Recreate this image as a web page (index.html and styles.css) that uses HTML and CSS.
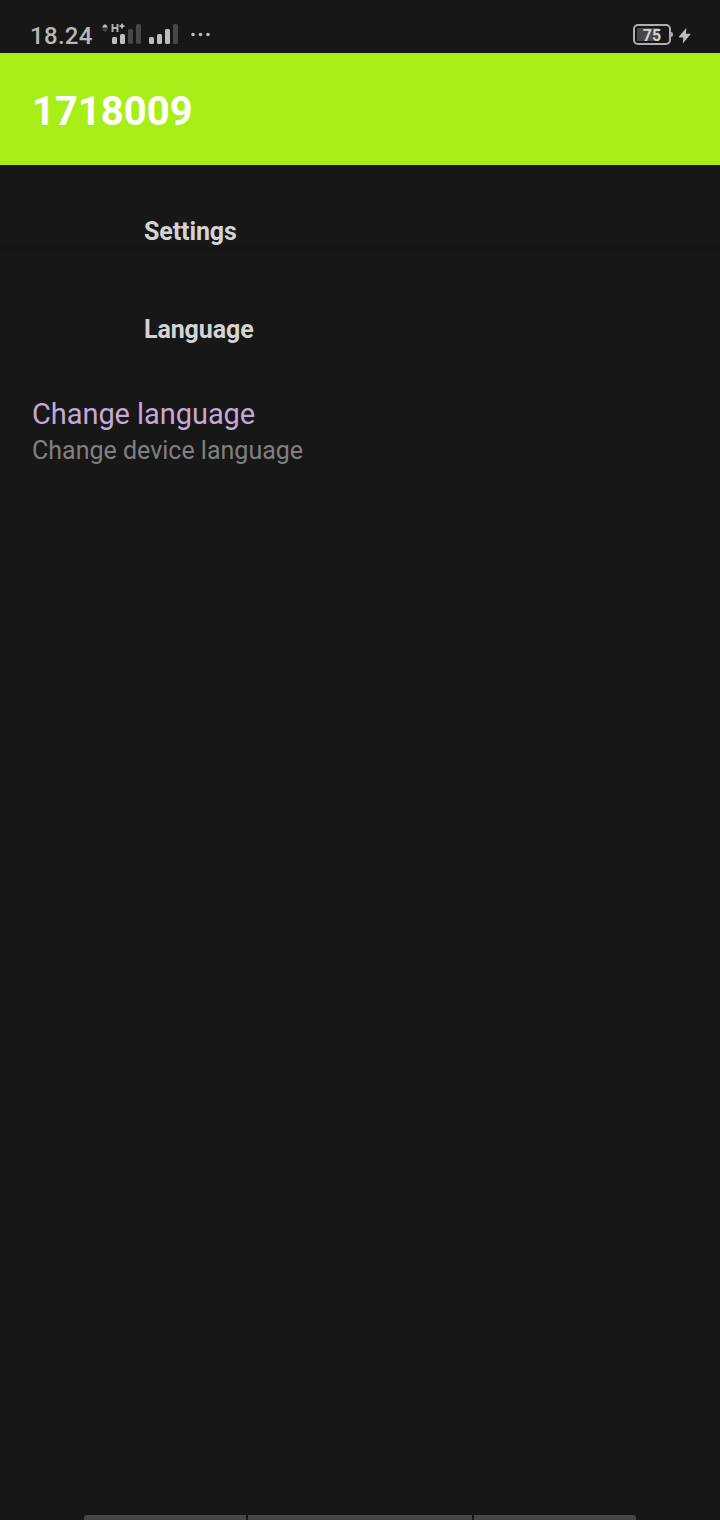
FILE: index.html
```html
<!DOCTYPE html>
<html lang="en">
<head>
<meta charset="utf-8">
<title>Settings</title>
<link rel="stylesheet" href="styles.css">
</head>
<body>
<div class="screen">
  <div class="status">
    <span class="time">18.24</span>
    <svg class="signals" width="112" height="26" viewBox="102 20 112 26">
      <g fill="#bdbdbd">
        <path d="M102 27.500 L104 24.500 H106 L108 27.500Z"/>
        <path d="M112.500 24v8M117.500 24v8M112 28h5.500" fill="none" stroke="#b0b0b0" stroke-width="1.900"/>
        <path d="M121.100 23.800h1.800v1.400h1.600v1.800h-1.600v1.400h-1.800v-1.400h-1.600v-1.800h1.600z"/>
        <rect x="112" y="37" width="5" height="7" rx="1.500"/>
        <rect x="120" y="34" width="5" height="10" rx="1.500"/>
        <rect x="149" y="37" width="5" height="7" rx="1.500"/>
        <rect x="157" y="34" width="5" height="10" rx="1.500"/>
        <rect x="165" y="29" width="5" height="15" rx="1.500"/>
        <circle cx="193" cy="34.500" r="1.800"/>
        <circle cx="200.500" cy="34.500" r="1.800"/>
        <circle cx="208" cy="34.500" r="1.800"/>
      </g>
      <g fill="#474747">
        <path d="M102 28.500h6L106 31.500H104Z"/>
        <rect x="128" y="29" width="5" height="15" rx="1.500"/>
        <rect x="136" y="24" width="5" height="20" rx="1.500"/>
        <rect x="173" y="24" width="5" height="20" rx="1.500"/>
      </g>
    </svg>
    <div class="battery"><span class="level">75</span></div>
    <svg class="bolt" width="12" height="16" viewBox="0 0 12 16"><path d="M7.300 0 L0 8.500 V9.500 H4.300 L3.800 15.500 L11.200 6.800 V5.800 H7Z" fill="#bdbdbd"/></svg>
  </div>
  <header class="appbar">1718009</header>
  <main class="content">
    <h2 class="category">Settings</h2>
    <h2 class="category second">Language</h2>
    <div class="preference">
      <div class="title">Change language</div>
      <div class="summary">Change device language</div>
    </div>
  </main>
  <div class="navhints"><i class="side"></i><i class="middle"></i><i class="side"></i></div>
</div>
</body>
</html>
```
FILE: styles.css
```css
* { box-sizing: border-box; }
body { margin: 0; background: #171717; font-family: Roboto, sans-serif; }
.screen { width: 720px; height: 1520px; display: flex; flex-direction: column; overflow: hidden; }
.status { height: 53px; flex: none; display: flex; align-items: flex-start; padding: 20px 29px 0 30px; color: #bdbdbd; }
.time { width: 72px; font-size: 24px; font-weight: 500; line-height: 32px; letter-spacing: 0.3px; color: #b8b8b8; }
.signals { display: block; }
.battery { position: relative; width: 38px; height: 21px; margin: 4px 8px 0 auto; border: 2px solid #aeaeae; border-radius: 5px; display: flex; align-items: center; justify-content: center; background: linear-gradient(#474747, #474747) 2px 2px / 22px 13px no-repeat; }
.battery::after { content: ""; position: absolute; right: -4px; top: 6px; width: 2px; height: 5px; background: #aeaeae; border-radius: 0 2px 2px 0; }
.level { font-size: 16px; line-height: 17px; font-weight: 700; color: #d0d0d0; padding-top: 1px; }
.bolt { display: block; margin-top: 8px; }
.appbar { height: 112px; flex: none; padding: 5px 32px 0; background: #a8ee18; color: #fff; font-size: 40px; font-weight: 700; line-height: 108px; }
.content { flex: 1; }
.category { margin: 0; padding: 52px 0 0 144px; height: 84px; border-bottom: 2px solid #141414; color: #d4d4d4; font-size: 25px; font-weight: 700; line-height: 30px; letter-spacing: -0.1px; }
.category.second { padding-top: 66px; height: 146px; border: 0; }
.preference { padding: 0 32px; }
.title { color: #c5a8d3; font-size: 29px; line-height: 38px; letter-spacing: -0.06px; }
.summary { color: #808080; font-size: 25px; line-height: 36px; }
.navhints { height: 5px; flex: none; display: flex; gap: 2px; padding: 0 84px; }
.navhints i { display: block; background: #474747; }
.side { width: 162px; }
.side:first-child { border-top-left-radius: 3px; }
.side:last-child { border-top-right-radius: 3px; }
.middle { flex: 1; }
```
